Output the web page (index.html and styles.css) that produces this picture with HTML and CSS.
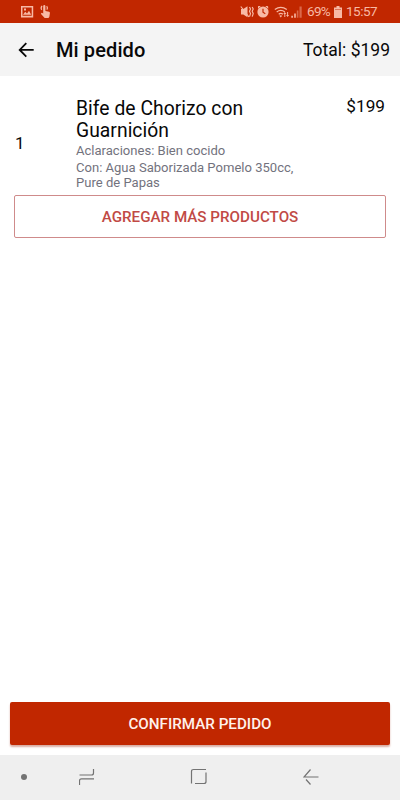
FILE: index.html
```
<!DOCTYPE html>
<html lang="es">
<head>
<meta charset="utf-8">
<title>Mi pedido</title>
<link rel="stylesheet" href="styles.css">
</head>
<body>
<div class="screen">
  <div class="status">
    <svg class="notifications" width="32" height="14" viewBox="0 0 32 14">
      <path fill-rule="evenodd" d="M1 1h12.200v11.400H1zM2.500 2.500v8.200h9.200V2.500zM3 9.800l2.200-3 1.800 1.800 2-2.800 2.200 4zM4 3.500h2v2H4z"/>
      <path d="M23.200 1.200a1.100 1.100 0 0 1 2.200 0v4.700l3.700.8q1 .4.800 1.600l-.6 3.700-.9 1h-3.700l-3.900-4.300 1-1 1.400.8z"/>
      <path class="line" d="M21.700 4.800a3 3 0 0 1 .4-3.800M26.700 1.100a3 3 0 0 1 .1 3.600"/>
    </svg>
    <svg class="indicators" width="63" height="14" viewBox="0 0 63 14">
      <path d="M1 4h2.300L7.500 1.200v11L3.300 9.500H1z"/>
      <path class="line" d="M.8 1.500 9 12"/>
      <path class="line" d="m9.500 2 1 2-1 2.300 1 2.300-1 3M12.200 2l1 2-1 2.300 1 2.300-1 3"/>
      <path d="M18.300 1h2.500L18 3.800V1.800zM25.300 1h2.200l.7.800v2z"/>
      <circle cx="23" cy="7" r="5.600"/>
      <path class="hands" d="M23 3.800v3.400l2.300 1.500"/>
      <path class="line" d="M34.800 4.600q6-4.500 12 0M36.700 7q4.100-3.200 8.200 0M38.700 9.200q2.100-1.700 4.200 0"/>
      <path d="m39.300 10.800 1.500 1.700 1.400-1.700q-1.400-1-2.900 0M44.800 7l1.500 2h-1v3h-1V9h-1zM47.600 12l-1.500-2h1V7h1v3h1z"/>
      <path d="M51.300 10.700h1.600v2h-1.600zM54.200 8.500h1.600v4.200h-1.600z"/>
      <path opacity=".45" d="M56.800 5.500h1.600v7.200h-1.600zM59.500 1.600h2.200v11.100h-2.200z"/>
    </svg>
    <span class="percent">69%</span>
    <svg class="battery" width="8" height="12" viewBox="0 0 8 12"><path d="M2.500 0h3v1.400H8V12H0V1.400h2.500z"/><path class="gap" d="M1 3h6v.8H1z"/></svg>
    <span class="clock">15:57</span>
  </div>
  <header class="appbar">
    <svg class="back" width="16" height="16" viewBox="0 0 16 16"><path d="M15.700 7.900H2.200M8.300 1.200 1.700 7.900l6.600 6.700"/></svg>
    <h1 class="title">Mi pedido</h1>
    <span class="total">Total: $199</span>
  </header>
  <main class="order">
    <div class="item">
      <span class="quantity">1</span>
      <div class="details">
        <h2 class="name">Bife de Chorizo con<br>Guarnición</h2>
        <p class="note">Aclaraciones: Bien cocido</p>
        <p class="extras">Con: Agua Saborizada Pomelo 350cc,<br>Pure de Papas</p>
      </div>
      <span class="price">$199</span>
    </div>
    <button class="add"><span>AGREGAR MÁS PRODUCTOS</span></button>
  </main>
  <button class="confirm"><span>CONFIRMAR PEDIDO</span></button>
  <nav class="navbar">
    <i class="dot"></i>
    <svg class="recents" width="16" height="18" viewBox="0 0 16 18"><path d="M.5 7h12q2 0 2-2V1M15 10.800H2.500q-2 0-2 2V17"/></svg>
    <svg class="home" width="18" height="18" viewBox="0 0 18 18"><path d="M1.500 15.500v-12q0-2 2-2H16M16 4.500v9q0 2-2 2H5"/></svg>
    <svg class="navback" width="16" height="18" viewBox="0 0 16 18"><path d="M15.500 9H1L7.500 1.500M3 11.500l4.500 5"/></svg>
  </nav>
</div>
</body>
</html>
```
FILE: styles.css
```
* { box-sizing: border-box; }
body, h1, h2, p { margin: 0; }
body { font-family: Roboto, "Liberation Sans", sans-serif; color: #080808; background: #fff; }
svg { display: block; flex: none; }
button { font-family: inherit; padding: 0; display: flex; align-items: center; justify-content: center; }
span { white-space: nowrap; }

.screen { width: 400px; height: 800px; display: flex; flex-direction: column; overflow: hidden; }

.status { height: 23px; background: #c12700; display: flex; align-items: center; color: #f8b9a5; padding-left: 20px; }
.status svg { fill: #f8b9a5; }
.status .line { fill: none; stroke: #f8b9a5; stroke-width: 1.2; }
.status .hands { fill: none; stroke: #c12700; stroke-width: 1.2; }
.status .gap { fill: #d4664a; }
.indicators { margin-left: 188px; }
.percent { margin-left: 4px; width: 27px; font-size: 13.5px; letter-spacing: -0.7px; }
.percent, .clock { line-height: 23px; height: 23px; }
.clock { margin-left: 4px; font-size: 13.5px; letter-spacing: -0.5px; }

.appbar { height: 53px; background: #f4f4f4; display: flex; align-items: center; padding: 0 10px 0 18px; }
.back { fill: none; stroke: #080808; stroke-width: 1.8; }
.title { margin-left: 22px; font-size: 20px; font-weight: 500; line-height: 24px; letter-spacing: 0.1px; }
.total { margin-left: auto; font-size: 17.5px; line-height: 22px; }

.order { flex: 1; padding: 20px 14px 0; }
.item { display: flex; height: 99px; }
.quantity { width: 62px; padding: 37px 0 0 1px; font-size: 17px; line-height: 20px; }
.details { flex: 1; padding-top: 2px; }
.name { font-size: 19.3px; font-weight: 400; line-height: 22px; letter-spacing: 0.04px; }
.note, .extras { color: #72727d; font-size: 13.05px; white-space: nowrap; }
.note { line-height: 17px; }
.extras { line-height: 15px; margin-top: 1px; }
.price { font-size: 17.2px; line-height: 20px; padding-right: 1px; }
.add { width: 372px; height: 43px; border: 1px solid #cf8b8b; border-radius: 2px; background: #fff; color: #c14a45; font-size: 15.2px; font-weight: 500; }

.confirm { width: 380px; height: 43px; margin: 0 0 10px 10px; border: 0; border-radius: 2px; background: #c12700; color: #fff1ec; font-size: 15.2px; font-weight: 500; box-shadow: 0 2px 2px #d9aca2; flex: none; }

.navbar { height: 45px; flex: none; background: #efefef; display: flex; align-items: center; padding: 0 0 2px 21px; }
.navbar path { fill: none; stroke: #737373; stroke-width: 1.2; }
.dot { width: 6px; height: 6px; border-radius: 50%; background: #737373; }
.recents { margin-left: 52px; }
.home { margin-left: 95px; }
.navback { margin-left: 95px; }
```
